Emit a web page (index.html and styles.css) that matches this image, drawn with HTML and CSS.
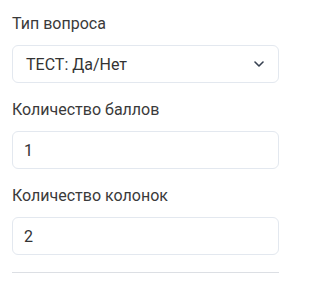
FILE: index.html
```html
<!DOCTYPE html>
<html lang="ru">
<head>
<meta charset="utf-8">
<link rel="stylesheet" href="styles.css">
</head>
<body>
<form class="panel">
  <div class="field">
    <label class="label">Тип вопроса</label>
    <div class="control select">
      <span class="value">ТЕСТ: Да/Нет</span>
      <svg class="chevron" width="10" height="6" viewBox="0 0 10 6"><path d="M1 1l4 4 4-4" fill="none" stroke="#374151" stroke-width="1.6" stroke-linecap="round" stroke-linejoin="round"/></svg>
    </div>
  </div>
  <div class="field">
    <label class="label">Количество баллов</label>
    <div class="control"><span class="value">1</span></div>
  </div>
  <div class="field">
    <label class="label">Количество колонок</label>
    <div class="control"><span class="value">2</span></div>
  </div>
  <hr class="divider">
</form>
</body>
</html>
```
FILE: styles.css
```css
html, body { margin: 0; padding: 0; background: #fff; }
body { font-family: Roboto, "Noto Sans", "Liberation Sans", sans-serif; color: #333; }
.panel { padding: 14px 12px 0 12px; width: 267px; display: flex; flex-direction: column; }
.field { display: flex; flex-direction: column; margin-bottom: 17px; }
.label { font-size: 16px; line-height: 20px; color: #3a3a3a; margin-bottom: 11px; }
.control { height: 38px; box-sizing: border-box; border: 1px solid #e3e8ef; border-radius: 6px; display: flex; align-items: center; padding: 0 11px; font-size: 16px; color: #333; }
.select { padding-left: 13px; justify-content: space-between; padding-right: 14px; }
.chevron { display: block; }
.divider { border: 0; border-top: 1px solid #dcdfe4; margin: 0; }
```
